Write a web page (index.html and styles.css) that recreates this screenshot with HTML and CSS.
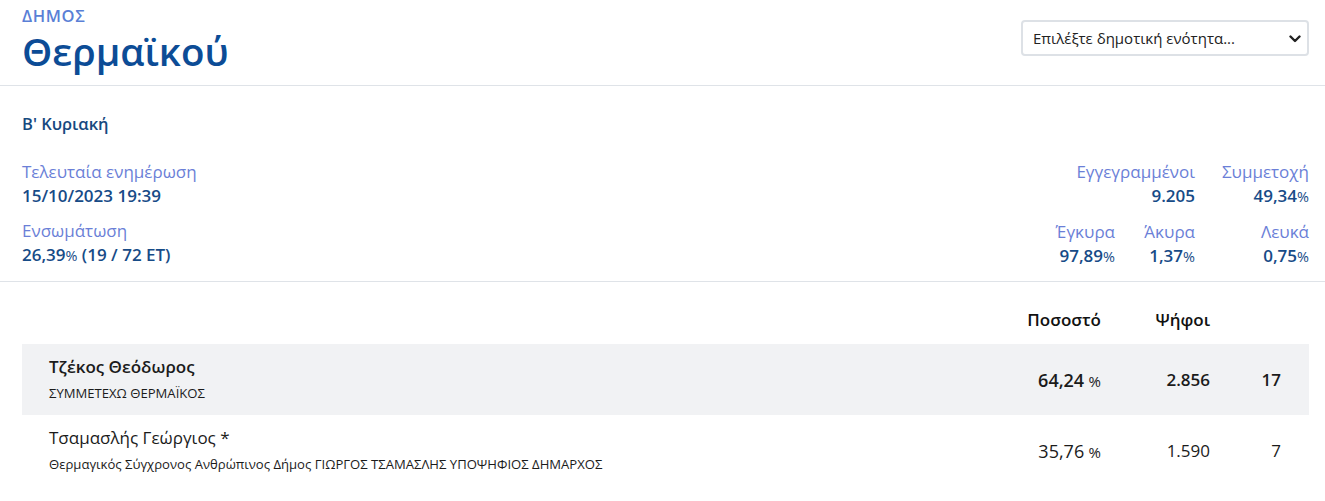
FILE: index.html
```html
<!DOCTYPE html>
<html lang="el">
<head>
  <meta charset="UTF-8">
  <meta name="viewport" content="width=device-width, initial-scale=1.0">
  <title>Δήμος Θερμαϊκού</title>
  <link rel="stylesheet" href="styles.css">
</head>

<body>
  <header class="top">
    <div class="place">
      <div class="kind">ΔΗΜΟΣ</div>
      <h1 class="name">Θερμαϊκού</h1>
    </div>
    <div class="picker">
      <select id="unit">
        <option>Επιλέξτε δημοτική ενότητα...</option>
      </select>
      <svg class="chevron" width="12" height="8" viewBox="0 0 12 8">
        <path d="M1.5 1.5 L6 6 L10.5 1.5" fill="none" stroke="#222" stroke-width="2.4" stroke-linecap="round" stroke-linejoin="round"/>
      </svg>
    </div>
  </header>

  <section class="summary">
    <h2 class="round">Β' Κυριακή</h2>
    <div class="stats">
      <div class="left">
        <div class="stat">
          <div class="label">Τελευταία ενημέρωση</div>
          <div class="value">15/10/2023 19:39</div>
        </div>
        <div class="stat">
          <div class="label">Ενσωμάτωση</div>
          <div class="value">26,39<span class="pct">%</span> (19 / 72 ΕΤ)</div>
        </div>
      </div>
      <div class="right">
        <div class="stat wide">
          <div class="label">Εγγεγραμμένοι</div>
          <div class="value">9.205</div>
        </div>
        <div class="stat">
          <div class="label">Συμμετοχή</div>
          <div class="value">49,34<span class="pct">%</span></div>
        </div>
        <div class="stat">
          <div class="label">Έγκυρα</div>
          <div class="value">97,89<span class="pct">%</span></div>
        </div>
        <div class="stat">
          <div class="label">Άκυρα</div>
          <div class="value">1,37<span class="pct">%</span></div>
        </div>
        <div class="stat">
          <div class="label">Λευκά</div>
          <div class="value">0,75<span class="pct">%</span></div>
        </div>
      </div>
    </div>
  </section>

  <section class="results">
    <div class="row head">
      <div></div>
      <div class="num">Ποσοστό</div>
      <div class="num">Ψήφοι</div>
      <div class="num"></div>
    </div>
    <div class="row lead">
      <div class="who">
        <div class="cand">Τζέκος Θεόδωρος</div>
        <div class="party">ΣΥΜΜΕΤΕΧΩ ΘΕΡΜΑΪΚΟΣ</div>
      </div>
      <div class="num"><span class="big">64,24</span> <span class="pct">%</span></div>
      <div class="num">2.856</div>
      <div class="num">17</div>
    </div>
    <div class="row">
      <div class="who">
        <div class="cand">Τσαμασλής Γεώργιος *</div>
        <div class="party">Θερμαγικός Σύγχρονος Ανθρώπινος Δήμος ΓΙΩΡΓΟΣ ΤΣΑΜΑΣΛΗΣ ΥΠΟΨΗΦΙΟΣ ΔΗΜΑΡΧΟΣ</div>
      </div>
      <div class="num"><span class="big">35,76</span> <span class="pct">%</span></div>
      <div class="num">1.590</div>
      <div class="num">7</div>
    </div>
  </section>
</body>

</html>
```

FILE: styles.css
```css
body {
  margin: 0;
  font-family: "Open Sans", "Noto Sans", sans-serif;
  color: #1b1b1b;
  background: #fff;
}

.top {
  display: flex;
  justify-content: space-between;
  align-items: flex-start;
  height: 86px;
  box-sizing: border-box;
  padding: 4px 16px 0 22px;
  border-bottom: 1px solid #dfe3e8;
}

.kind {
  font-size: 16.5px;
  font-weight: 600;
  letter-spacing: 0.6px;
  color: #5a7fd6;
  line-height: 24px;
}

.name {
  margin: 0;
  font-size: 38.5px;
  font-weight: 600;
  color: #0c4c96;
  line-height: 46px;
}

.picker {
  position: relative;
  margin-top: 16px;
}

.picker select {
  appearance: none;
  width: 288px;
  height: 36px;
  padding: 0 30px 0 10px;
  font-family: inherit;
  font-size: 15px;
  color: #222;
  background: #fff;
  border: 2px solid #dde1e6;
  border-radius: 4px;
}

.chevron {
  position: absolute;
  right: 8px;
  top: 15px;
  pointer-events: none;
}

.summary {
  padding: 26px 16px 12px 22px;
  border-bottom: 1px solid #dfe3e8;
}

.round {
  margin: 0 0 24px;
  font-size: 16.5px;
  font-weight: 600;
  color: #17497f;
  line-height: 24px;
}

.stats {
  display: flex;
  justify-content: space-between;
}

.left {
  display: flex;
  flex-direction: column;
  gap: 11px;
}

.right {
  display: grid;
  grid-template-columns: 80px 80px 114px;
  row-gap: 11px;
  text-align: right;
}

.right .wide {
  grid-column: span 2;
}

.label {
  font-size: 17px;
  color: #6b7fd7;
  line-height: 24px;
}

.value {
  font-size: 17px;
  font-weight: 600;
  color: #174b87;
  line-height: 24px;
}

.pct {
  font-size: 0.85em;
  font-weight: 400;
}

.results {
  padding: 26px 16px 0 22px;
}

.row {
  display: grid;
  grid-template-columns: 1fr 110px 109px 71px;
  align-items: center;
  padding: 0 28px 0 27px;
  height: 71px;
}

.row.head {
  height: 36px;
  align-items: start;
  font-weight: 600;
  color: #111;
}

.row.lead {
  background: #f1f2f4;
  font-weight: 600;
}

.num {
  text-align: right;
  font-size: 17px;
}

.num .big {
  font-size: 18px;
}

.num .pct {
  font-size: 15px;
}

.head .num {
  font-size: 17px;
}

.cand {
  font-size: 17px;
  line-height: 24px;
}

.party {
  font-size: 13.1px;
  font-weight: 400;
  line-height: 24px;
  margin-top: 2px;
}
```
